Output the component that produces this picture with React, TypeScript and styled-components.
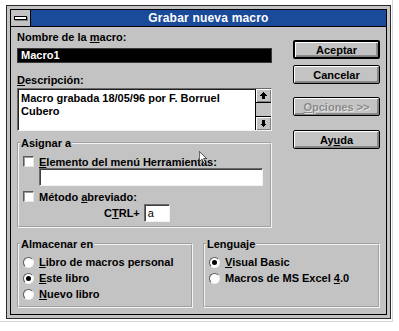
import * as React from 'react'
import styled, { createGlobalStyle } from 'styled-components'

const GlobalStyle = createGlobalStyle`
  html, body {
    margin: 0;
    padding: 0;
    background: #fff;
  }
  body {
    font-family: 'Liberation Sans', Arial, sans-serif;
    font-size: 11px;
    font-weight: bold;
    color: #000;
  }
`

const Page = styled.div`
  position: relative;
  width: 393px;
  height: 322px;
  box-sizing: border-box;
  padding: 5px 0 0 6px;
  border-right: 1px solid #d6d6d6;
  border-bottom: 1px solid #d6d6d6;
`

const Frame = styled.div`
  width: 385px;
  height: 314px;
  box-sizing: border-box;
  display: flex;
  border: 1px solid #2a2a2a;
  background: #c3c3c3;
  padding: 3px;
`

const Window = styled.div`
  flex: 1;
  display: flex;
  flex-direction: column;
  border: 1px solid #000;
`

const TitleBar = styled.div`
  height: 16px;
  display: flex;
  border-bottom: 1px solid #000;
`

const SysMenu = styled.div`
  width: 19px;
  display: flex;
  align-items: center;
  justify-content: center;
  background: #c3c3c3;
  border-right: 1px solid #000;
`

const SysBar = styled.div`
  width: 11px;
  height: 2px;
  background: #fff;
  border: 1px solid #000;
  box-shadow: 1px 1px 0 #808080;
`

const Caption = styled.div`
  flex: 1;
  display: flex;
  align-items: center;
  justify-content: center;
  background: #1a4a9a;
  color: #fff;
  font-size: 12px;
  letter-spacing: 0.2px;
`

const Body = styled.div`
  flex: 1;
  display: flex;
  flex-direction: column;
  padding: 3px 5px 0 6px;
`

const Top = styled.div`
  display: flex;
`

const LeftCol = styled.div`
  width: 255px;
  display: flex;
  flex-direction: column;
`

const RightCol = styled.div`
  width: 87px;
  margin-left: 21px;
  padding-top: 10px;
  display: flex;
  flex-direction: column;
`

const Label = styled.div<{ $top?: number }>`
  height: 14px;
  line-height: 14px;
  margin-top: ${({ $top }) => $top || 0}px;
`

const U = styled.span`
  text-decoration: underline;
  text-underline-offset: 1px;
`

const NameInput = styled.div`
  height: 15px;
  margin-top: 4px;
  box-sizing: border-box;
  background: #000;
  border: 1px solid #3a3a3a;
  color: #fff;
  line-height: 13px;
  padding-left: 3px;
`

const DescBox = styled.div`
  height: 43px;
  margin-top: 1px;
  box-sizing: border-box;
  display: flex;
  background: #fff;
  border: 1px solid;
  border-color: #6a6a6a #f2f2f2 #f2f2f2 #6a6a6a;
  box-shadow: inset 1px 1px 0 #202020;
`

const DescText = styled.div`
  flex: 1;
  padding: 3px 0 0 3px;
  line-height: 13px;
`

const ScrollBar = styled.div`
  width: 15px;
  display: flex;
  flex-direction: column;
  justify-content: space-between;
  background: #c3c3c3;
  border-left: 1px solid #000;
`

const ScrollButton = styled.div`
  height: 14px;
  box-sizing: border-box;
  display: flex;
  align-items: center;
  justify-content: center;
  background: #c3c3c3;
  box-shadow: inset 1px 1px 0 #fff, inset -1px -1px 0 #808080;
  border-top: 1px solid #000;
  &:first-child {
    border-top: none;
    border-bottom: 1px solid #000;
  }
`

const Group = styled.fieldset<{ $width?: number }>`
  margin: 0;
  padding: 0 4px 4px 4px;
  min-width: 0;
  box-sizing: border-box;
  width: ${({ $width }) => ($width ? `${$width}px` : '100%')};
  border: 2px groove #f4f4f4;
  display: flex;
  flex-direction: column;
`

const Legend = styled.legend`
  padding: 0 1px;
  margin-left: -3px;
  height: 14px;
  line-height: 14px;
`

const OptionRow = styled.div<{ $top?: number; $h?: number }>`
  display: flex;
  align-items: center;
  height: ${({ $h }) => $h || 13}px;
  margin-top: ${({ $top }) => $top || 0}px;
  gap: 5px;
`

const CheckBox = styled.div`
  width: 11px;
  height: 11px;
  box-sizing: border-box;
  background: #fff;
  border: 1px solid;
  border-color: #5a5a5a #e6e6e6 #e6e6e6 #5a5a5a;
  box-shadow: inset 1px 1px 0 #9a9a9a;
`

const Radio = styled.div<{ $checked?: boolean }>`
  width: 11px;
  height: 11px;
  box-sizing: border-box;
  border-radius: 50%;
  background: #fff;
  border: 1px solid;
  border-color: #5a5a5a #eeeeee #eeeeee #5a5a5a;
  display: flex;
  align-items: center;
  justify-content: center;
  &::after {
    content: '';
    width: 5px;
    height: 5px;
    border-radius: 50%;
    background: ${({ $checked }) => ($checked ? '#000' : 'transparent')};
  }
`

const Edit = styled.div<{ $width: number; $left?: number }>`
  width: ${({ $width }) => $width}px;
  height: 18px;
  margin-left: ${({ $left }) => $left || 0}px;
  box-sizing: border-box;
  background: #fff;
  border: 1px solid;
  border-color: #6a6a6a #f2f2f2 #f2f2f2 #6a6a6a;
  box-shadow: inset 1px 1px 0 #404040;
  padding-left: 3px;
  line-height: 16px;
  font-weight: normal;
`

const CtrlRow = styled.div`
  display: flex;
  align-items: center;
  gap: 4px;
  margin-top: 1px;
  padding-left: 81px;
`

const Button = styled.button<{ $default?: boolean; $disabled?: boolean; $top?: number }>`
  height: 19px;
  width: 87px;
  margin-top: ${({ $top }) => $top || 0}px;
  padding: 0;
  box-sizing: border-box;
  font: inherit;
  background: #c3c3c3;
  border: ${({ $default }) => ($default ? 2 : 1)}px solid #000;
  border-radius: 2px;
  box-shadow: inset 1px 1px 0 #fff, inset -1px -1px 0 #808080, inset -2px -2px 0 #8c8c8c;
  color: ${({ $disabled }) => ($disabled ? '#8a8a8a' : '#000')};
  text-shadow: ${({ $disabled }) => ($disabled ? '1px 1px 0 #e6e6e6' : 'none')};
`

const Bottom = styled.div`
  display: flex;
  gap: 10px;
  margin-top: 9px;
`

const Cursor = styled.svg`
  position: absolute;
  left: 199px;
  top: 151px;
`

const Arrow = ({ down }: { down?: boolean }) => (
  <svg width="7" height="7" viewBox="0 0 7 7" shapeRendering="crispEdges" style={{ transform: down ? 'rotate(180deg)' : undefined }}>
    <polygon points="3.5,0 7,3.5 5,3.5 5,7 2,7 2,3.5 0,3.5" fill="#000" />
  </svg>
)

export default function App() {
  return (
    <Page>
      <GlobalStyle />
      <Frame>
        <Window>
          <TitleBar>
            <SysMenu>
              <SysBar />
            </SysMenu>
            <Caption>Grabar nueva macro</Caption>
          </TitleBar>
          <Body>
            <Top>
              <LeftCol>
                <Label>
                  Nombre de la <U>m</U>acro:
                </Label>
                <NameInput>Macro1</NameInput>
                <Label $top={10}>
                  <U>D</U>escripción:
                </Label>
                <DescBox>
                  <DescText>
                    Macro grabada 18/05/96 por F. Borruel
                    <br />
                    Cubero
                  </DescText>
                  <ScrollBar>
                    <ScrollButton>
                      <Arrow />
                    </ScrollButton>
                    <ScrollButton>
                      <Arrow down />
                    </ScrollButton>
                  </ScrollBar>
                </DescBox>
                <Group style={{ marginTop: 5 }}>
                  <Legend>Asignar a</Legend>
                  <OptionRow $top={5}>
                    <CheckBox />
                    <span>
                      <U>E</U>lemento del menú Herramientas:
                    </span>
                  </OptionRow>
                  <Edit $width={224} $left={16} />
                  <OptionRow $top={4}>
                    <CheckBox />
                    <span>
                      Método <U>a</U>breviado:
                    </span>
                  </OptionRow>
                  <CtrlRow>
                    <span>
                      C<U>T</U>RL+
                    </span>
                    <Edit $width={26}>a</Edit>
                  </CtrlRow>
                </Group>
              </LeftCol>
              <RightCol>
                <Button $default>Aceptar</Button>
                <Button $top={6}>Cancelar</Button>
                <Button $top={13} $disabled>
                  <U>O</U>pciones &gt;&gt;
                </Button>
                <Button $top={14}>
                  Ay<U>u</U>da
                </Button>
              </RightCol>
            </Top>
            <Bottom>
              <Group $width={176}>
                <Legend>Almacenar en</Legend>
                <OptionRow $top={3} $h={16}>
                  <Radio />
                  <span>
                    <U>L</U>ibro de macros personal
                  </span>
                </OptionRow>
                <OptionRow $h={16}>
                  <Radio $checked />
                  <span>
                    <U>E</U>ste libro
                  </span>
                </OptionRow>
                <OptionRow $h={16}>
                  <Radio />
                  <span>
                    <U>N</U>uevo libro
                  </span>
                </OptionRow>
              </Group>
              <Group $width={177}>
                <Legend>Lenguaje</Legend>
                <OptionRow $top={3} $h={16}>
                  <Radio $checked />
                  <span>
                    <U>V</U>isual Basic
                  </span>
                </OptionRow>
                <OptionRow $h={16}>
                  <Radio />
                  <span>
                    Macros de MS Excel <U>4</U>.0
                  </span>
                </OptionRow>
              </Group>
            </Bottom>
          </Body>
        </Window>
      </Frame>
      <Cursor width="8" height="13" viewBox="0 0 12 19">
        <path d="M0.5 0.5 L0.5 16 L4.5 12 L7.5 18.5 L10 17.5 L7 11 L11.5 11 Z" fill="#fff" stroke="#000" strokeWidth="1" />
      </Cursor>
    </Page>
  )
}
